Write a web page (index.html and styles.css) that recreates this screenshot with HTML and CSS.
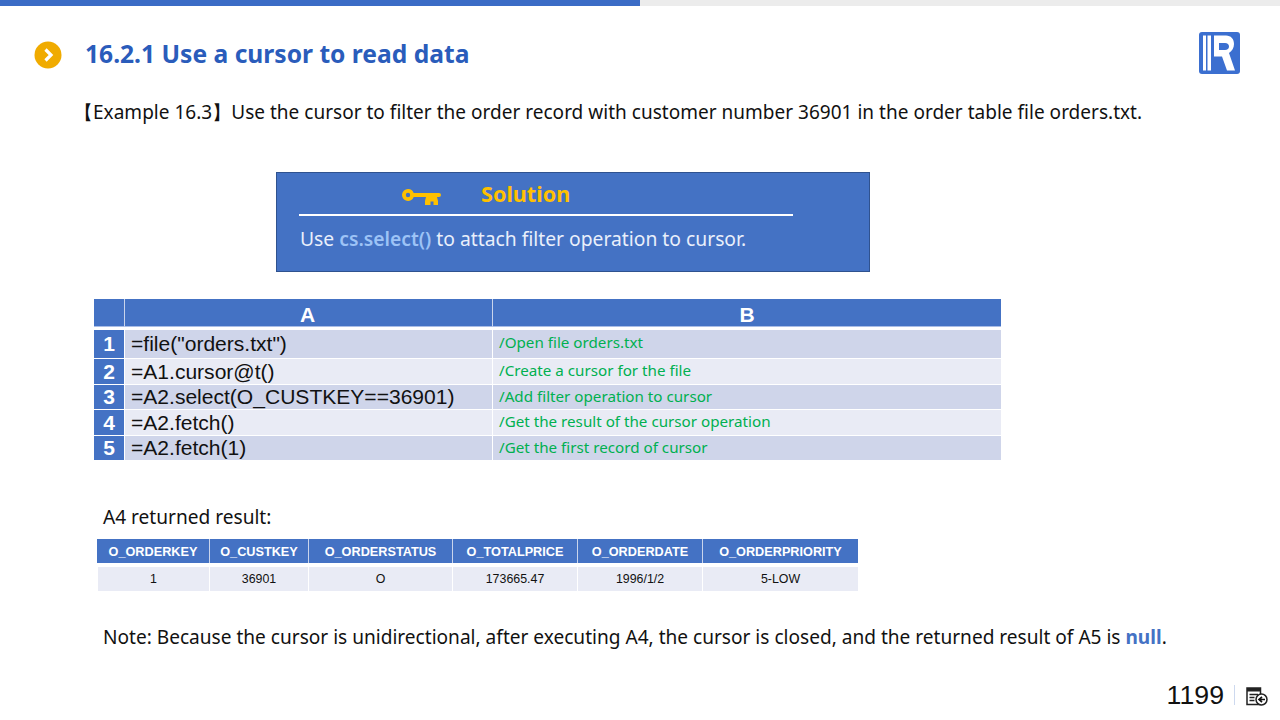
FILE: index.html
```html
<!DOCTYPE html>
<html lang="en">
<head>
<meta charset="utf-8">
<title>16.2.1 Use a cursor to read data</title>
<link rel="stylesheet" href="styles.css">
</head>
<body>
<div class="slide">
  <div class="progress"><div class="progress-fill"></div></div>
  <header class="head">
    <svg class="bullet" width="28" height="28" viewBox="0 0 28 28"><circle cx="14" cy="14" r="13.5" fill="#f0ab00"/><path d="M11.5 8.5 17 14l-5.500 5.500" fill="none" stroke="#fff" stroke-width="3.200"/></svg>
    <h1 class="title">16.2.1 Use a cursor to read data</h1>
    <svg class="logo" width="41" height="42" viewBox="0 0 41 42"><rect width="41" height="42" rx="3" fill="#3b6fd0"/><path d="M4 3.500h3v35H4zM8.500 3.500H12v35H8.500z" fill="#fff"/><path fill-rule="evenodd" d="M15 3.500h12c5 0 8 3.500 8 8.500 0 4-2 7-5 9l6 17.500h-8l-5-14H15V3.500zm5 7.500v7h6c2.500 0 4-1.500 4-3.500S28.500 11 26 11h-6z" fill="#fff"/></svg>
  </header>
  <p class="example">【Example 16.3】Use the cursor to filter the order record with customer number 36901 in the order table file orders.txt.</p>

  <section class="solution">
    <div class="sol-head">
      <svg class="key" width="39" height="16" viewBox="0 0 39 16"><path d="M6 0a6 6 0 0 1 5.700 4H37a2 2 0 0 1 0 4h-2l1 4v4h-4.500v-3.500h-3V16H23v-4l1-4H11.700A6 6 0 1 1 6 0zm0 3.800a2.200 2.200 0 1 0 0 4.400 2.200 2.200 0 0 0 0-4.400z" fill="#ffc000" fill-rule="evenodd"/></svg>
      <span class="sol-title">Solution</span>
    </div>
    <div class="sol-text">Use <b class="sol-code">cs.select()</b> to attach filter operation to cursor.</div>
  </section>

  <section class="code">
    <div class="code-head corner"></div><div class="code-head col-a">A</div><div class="code-head">B</div>
    <div class="num r1">1</div><div class="cell dark r1">=file("orders.txt")</div><div class="note dark r1">/Open file orders.txt</div>
    <div class="num r2">2</div><div class="cell light r2">=A1.cursor@t()</div><div class="note light r2">/Create a cursor for the file</div>
    <div class="num r3">3</div><div class="cell dark r3">=A2.select(O_CUSTKEY==36901)</div><div class="note dark r3">/Add filter operation to cursor</div>
    <div class="num r4">4</div><div class="cell light r4">=A2.fetch()</div><div class="note light r4">/Get the result of the cursor operation</div>
    <div class="num r5">5</div><div class="cell dark r5">=A2.fetch(1)</div><div class="note dark r5">/Get the first record of cursor</div>
  </section>

  <p class="returned">A4 returned result:</p>

  <section class="result">
    <div class="rh">O_ORDERKEY</div><div class="rh">O_CUSTKEY</div><div class="rh">O_ORDERSTATUS</div><div class="rh">O_TOTALPRICE</div><div class="rh">O_ORDERDATE</div><div class="rh">O_ORDERPRIORITY</div>
    <div class="rd">1</div><div class="rd">36901</div><div class="rd">O</div><div class="rd">173665.47</div><div class="rd">1996/1/2</div><div class="rd">5-LOW</div>
  </section>

  <p class="footnote">Note: Because the cursor is unidirectional, after executing A4, the cursor is closed, and the returned result of A5 is <b class="null">null</b>.</p>

  <footer class="foot">
    <span class="page">1199</span>
    <span class="sep"></span>
    <svg class="back" width="22" height="19" viewBox="0 0 22 19"><path d="M1 1h13.500v16.500H1z" fill="#fff" stroke="#222" stroke-width="1.500"/><path d="M1 1h14v3.500H1z" fill="#222"/><path d="M3.500 7.500h8.500M3.500 10.500h5M3.500 13.500h5" stroke="#222" stroke-width="1.300"/><circle cx="15.500" cy="12.500" r="5.500" fill="#fff" stroke="#222" stroke-width="1.500"/><path d="M19 12.500h-5M16 9.800l-3 2.700 3 2.700" fill="none" stroke="#111" stroke-width="1.700"/></svg>
  </footer>
</div>
</body>
</html>
```

FILE: styles.css
```css
* { box-sizing: border-box; }
html, body { margin: 0; padding: 0; background: #fff; }
body { font-family: "Noto Sans", "Open Sans", sans-serif; color: #111; }
.slide { width: 1280px; height: 720px; overflow: hidden; display: flex; flex-direction: column; }

.progress { height: 6px; background: #ececec; flex: none; }
.progress-fill { width: 640px; height: 6px; background: #3b6cc6; }

.head { display: flex; align-items: center; height: 42px; margin-top: 26px; padding-left: 33px; padding-right: 40px; flex: none; }
.bullet { flex: none; margin-top: 3px; margin-left: 1px; }
.title { margin: 2px 0 0 23px; font-size: 24.600px; line-height: 42px; font-weight: 700; color: #2a5cbb; flex: 1; white-space: nowrap; }
.logo { flex: none; }

.example { margin: 26px 0 0 74px; font-size: 19px; line-height: 24px; white-space: nowrap; letter-spacing: 0.018px; }

.solution { width: 594px; height: 100px; margin: 48px 0 0 276px; background: #4472c4; border: 1px solid #2f528f; padding: 0 22px; flex: none; }
.sol-head { width: 494px; height: 43px; border-bottom: 2px solid #fff; display: flex; align-items: center; padding-left: 103px; }
.key { flex: none; margin-top: 6px; }
.sol-title { margin-left: 40px; font-size: 21.600px; font-weight: 700; color: #ffc000; line-height: 42px; }
.sol-text { margin-top: 9px; padding-left: 1px; font-size: 19.300px; line-height: 28px; color: #e9effb; white-space: nowrap; }
.sol-code { color: #9dc3f6; font-weight: 600; }

.code { width: 907px; margin: 27px 0 0 94px; display: grid; grid-template-columns: 30px 368px 509px; grid-template-rows: 28px 31px 26px 25px 26px 25px; flex: none; font-family: "Liberation Sans", Arial, sans-serif; }
.code-head { background: #4472c4; color: #fff; font-weight: 700; font-size: 21px; display: flex; align-items: center; justify-content: center; border-left: 1px solid #c9d4ec; border-bottom: 1px solid #a9bde6; padding-top: 4px; }
.corner { border-left: 0; }
.col-a { padding-right: 2px; }
.num { background: #4472c4; color: #fff; font-weight: 700; font-size: 21px; display: flex; align-items: center; justify-content: center; border-top: 1px solid #fff; }
.r1.num, .r1.cell, .r1.note { border-top-width: 3px; border-top-style: solid; border-top-color: #fff; }
.cell, .note { display: flex; align-items: center; white-space: nowrap; border-top: 1px solid #fff; border-left: 1px solid #fff; }
.cell { padding-left: 6px; font-size: 21.050px; color: #111; }
.note { padding-left: 6px; font-family: "Noto Sans", sans-serif; font-size: 15.200px; color: #00b050; padding-bottom: 3px; }
.r1.note { padding-bottom: 5px; }
.dark { background: #cfd5ea; }
.light { background: #e9ebf5; }

.returned { margin: 45px 0 0 103px; font-size: 19.100px; line-height: 24px; flex: none; }

.result { width: 761px; margin: 10px 0 0 97px; display: grid; grid-template-columns: 112px 99px 144px 125px 125px 156px; grid-template-rows: 24px 28px; flex: none; font-family: "Liberation Sans", Arial, sans-serif; }
.rh { background: #4472c4; color: #fff; font-weight: 700; font-size: 12.700px; display: flex; align-items: center; justify-content: center; border-left: 1px solid #c9d4ec; padding-top: 1px; }
.rh:first-child { border-left: 0; }
.rd { background: #e9ebf5; border-top: 4px solid #fff; border-left: 1px solid #fff; font-size: 12.400px; display: flex; align-items: center; justify-content: center; color: #111; padding-bottom: 1px; }

.footnote { margin: 34px 0 0 103px; font-size: 19.080px; line-height: 24px; white-space: nowrap; flex: none; }
.null { color: #4472c4; font-weight: 700; }

.foot { display: flex; align-items: center; justify-content: flex-end; margin-top: 29px; padding-right: 12px; height: 34px; flex: none; }
.page { font-family: "Liberation Sans", Arial, sans-serif; font-size: 26.700px; color: #111; }
.sep { width: 1px; height: 20px; background: #cdd9ef; margin: 0 11px 0 10px; }
.back { flex: none; margin-top: 2px; }
```
